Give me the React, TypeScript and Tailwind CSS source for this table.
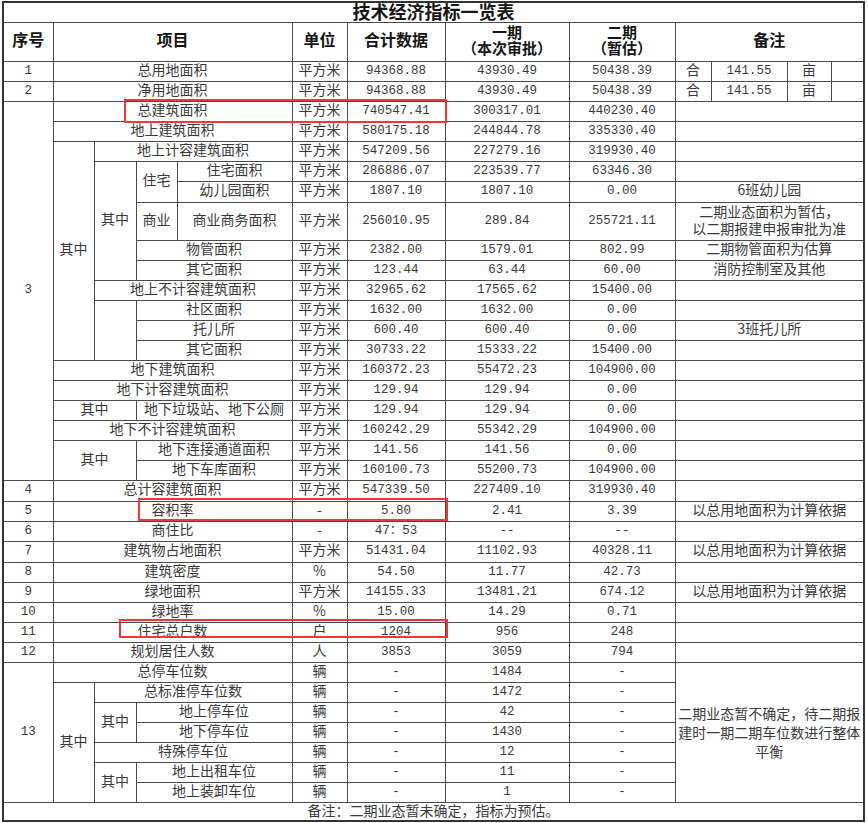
import React from "react";

const BASE = "border border-[#4a4a4a] px-0 pt-0 text-center align-middle whitespace-nowrap";
const CJK = "pb-[5px] leading-[14px]";
const NUM = "pb-[1px] leading-[18px] font-['Liberation_Mono','Noto_Sans_CJK_SC',monospace] text-[12.5px]";

type TP = { children?: React.ReactNode; cs?: number; rs?: number; n?: boolean; className?: string };
function T({ children, cs, rs, n, className }: TP) {
  return (
    <td colSpan={cs} rowSpan={rs} className={`${BASE} ${n ? NUM : className ? "" : CJK} ${className ?? ""}`}>
      {children}
    </td>
  );
}

function Tail({ u, a, b, c }: { u: string; a: string; b: string; c: string }) {
  return (
    <>
      <T>{u}</T>
      <T n>{a}</T>
      <T n>{b}</T>
      <T n>{c}</T>
    </>
  );
}

export default function App() {
  const widths = [50, 41, 42, 41, 115, 55, 98, 124, 106, 36, 76, 44, 33];
  return (
    <div className="relative w-[868px] h-[823px] bg-white overflow-hidden">
      <div className="pl-[2px] pt-[1px]">
        <table className="table-fixed border-collapse w-[862px] font-['Noto_Sans_CJK_SC',sans-serif] text-[14px] text-[#3a3a3a] border-2 border-[#333]">
          <colgroup>
            {widths.map((w, i) => (
              <col key={i} style={{ width: w }} />
            ))}
          </colgroup>
          <tbody>
            <tr className="h-[20px]">
              <T cs={13} className="font-bold text-[18px] leading-[17px] pb-[1px] text-[#151515]">技术经济指标一览表</T>
            </tr>
            <tr className="h-[39px] font-bold text-[16px] text-[#151515]">
              <T>序号</T>
              <T cs={4}>项目</T>
              <T>单位</T>
              <T>合计数据</T>
              <T className="text-[15px] leading-[16px] pb-[3px]">一期<br />（本次审批）</T>
              <T className="text-[15px] leading-[16px] pb-[3px]">二期<br />（暂估）</T>
              <T cs={4}>备注</T>
            </tr>
            <tr className="h-[20px]">
              <T n>1</T>
              <T cs={4}>总用地面积</T>
              <Tail u="平方米" a="94368.88" b="43930.49" c="50438.39" />
              <T>合</T>
              <T n>141.55</T>
              <T>亩</T>
              <T></T>
            </tr>
            <tr className="h-[20px]">
              <T n>2</T>
              <T cs={4}>净用地面积</T>
              <Tail u="平方米" a="94368.88" b="43930.49" c="50438.39" />
              <T>合</T>
              <T n>141.55</T>
              <T>亩</T>
              <T></T>
            </tr>
            <tr className="h-[20px]">
              <T rs={18} n>3</T>
              <T cs={4}>总建筑面积</T>
              <Tail u="平方米" a="740547.41" b="300317.01" c="440230.40" />
              <T cs={4}></T>
            </tr>
            <tr className="h-[20px]">
              <T cs={4}>地上建筑面积</T>
              <Tail u="平方米" a="580175.18" b="244844.78" c="335330.40" />
              <T cs={4}></T>
            </tr>
            <tr className="h-[20px]">
              <T rs={10}>其中</T>
              <T cs={3}>地上计容建筑面积</T>
              <Tail u="平方米" a="547209.56" b="227279.16" c="319930.40" />
              <T cs={4}></T>
            </tr>
            <tr className="h-[20px]">
              <T rs={5}>其中</T>
              <T rs={2}>住宅</T>
              <T>住宅面积</T>
              <Tail u="平方米" a="286886.07" b="223539.77" c="63346.30" />
              <T cs={4}></T>
            </tr>
            <tr className="h-[21px]">
              <T>幼儿园面积</T>
              <Tail u="平方米" a="1807.10" b="1807.10" c="0.00" />
              <T cs={4}>6班幼儿园</T>
            </tr>
            <tr className="h-[38px]">
              <T>商业</T>
              <T>商业商务面积</T>
              <Tail u="平方米" a="256010.95" b="289.84" c="255721.11" />
              <T cs={4} className="leading-[17px] pb-[3px]">二期业态面积为暂估，<br />以二期报建申报审批为准</T>
            </tr>
            <tr className="h-[20px]">
              <T cs={2}>物管面积</T>
              <Tail u="平方米" a="2382.00" b="1579.01" c="802.99" />
              <T cs={4}>二期物管面积为估算</T>
            </tr>
            <tr className="h-[20px]">
              <T cs={2}>其它面积</T>
              <Tail u="平方米" a="123.44" b="63.44" c="60.00" />
              <T cs={4}>消防控制室及其他</T>
            </tr>
            <tr className="h-[20px]">
              <T cs={3}>地上不计容建筑面积</T>
              <Tail u="平方米" a="32965.62" b="17565.62" c="15400.00" />
              <T cs={4}></T>
            </tr>
            <tr className="h-[20px]">
              <T rs={3}></T>
              <T cs={2}>社区面积</T>
              <Tail u="平方米" a="1632.00" b="1632.00" c="0.00" />
              <T cs={4}></T>
            </tr>
            <tr className="h-[20px]">
              <T cs={2}>托儿所</T>
              <Tail u="平方米" a="600.40" b="600.40" c="0.00" />
              <T cs={4}>3班托儿所</T>
            </tr>
            <tr className="h-[20px]">
              <T cs={2}>其它面积</T>
              <Tail u="平方米" a="30733.22" b="15333.22" c="15400.00" />
              <T cs={4}></T>
            </tr>
            <tr className="h-[20px]">
              <T cs={4}>地下建筑面积</T>
              <Tail u="平方米" a="160372.23" b="55472.23" c="104900.00" />
              <T cs={4}></T>
            </tr>
            <tr className="h-[20px]">
              <T cs={4}>地下计容建筑面积</T>
              <Tail u="平方米" a="129.94" b="129.94" c="0.00" />
              <T cs={4}></T>
            </tr>
            <tr className="h-[20px]">
              <T cs={2}>其中</T>
              <T cs={2}>地下垃圾站、地下公厕</T>
              <Tail u="平方米" a="129.94" b="129.94" c="0.00" />
              <T cs={4}></T>
            </tr>
            <tr className="h-[20px]">
              <T cs={4}>地下不计容建筑面积</T>
              <Tail u="平方米" a="160242.29" b="55342.29" c="104900.00" />
              <T cs={4}></T>
            </tr>
            <tr className="h-[20px]">
              <T cs={2} rs={2}>其中</T>
              <T cs={2}>地下连接通道面积</T>
              <Tail u="平方米" a="141.56" b="141.56" c="0.00" />
              <T cs={4}></T>
            </tr>
            <tr className="h-[20px]">
              <T cs={2}>地下车库面积</T>
              <Tail u="平方米" a="160100.73" b="55200.73" c="104900.00" />
              <T cs={4}></T>
            </tr>
            <tr className="h-[21px]">
              <T n>4</T>
              <T cs={4}>总计容建筑面积</T>
              <Tail u="平方米" a="547339.50" b="227409.10" c="319930.40" />
              <T cs={4}></T>
            </tr>
            <tr className="h-[20px]">
              <T n>5</T>
              <T cs={4}>容积率</T>
              <Tail u="-" a="5.80" b="2.41" c="3.39" />
              <T cs={4}>以总用地面积为计算依据</T>
            </tr>
            <tr className="h-[20px]">
              <T n>6</T>
              <T cs={4}>商住比</T>
              <Tail u="-" a="47：53" b="--" c="--" />
              <T cs={4}></T>
            </tr>
            <tr className="h-[21px]">
              <T n>7</T>
              <T cs={4}>建筑物占地面积</T>
              <Tail u="平方米" a="51431.04" b="11102.93" c="40328.11" />
              <T cs={4}>以总用地面积为计算依据</T>
            </tr>
            <tr className="h-[20px]">
              <T n>8</T>
              <T cs={4}>建筑密度</T>
              <Tail u="%" a="54.50" b="11.77" c="42.73" />
              <T cs={4}></T>
            </tr>
            <tr className="h-[20px]">
              <T n>9</T>
              <T cs={4}>绿地面积</T>
              <Tail u="平方米" a="14155.33" b="13481.21" c="674.12" />
              <T cs={4}>以总用地面积为计算依据</T>
            </tr>
            <tr className="h-[20px]">
              <T n>10</T>
              <T cs={4}>绿地率</T>
              <Tail u="%" a="15.00" b="14.29" c="0.71" />
              <T cs={4}></T>
            </tr>
            <tr className="h-[20px]">
              <T n>11</T>
              <T cs={4}>住宅总户数</T>
              <Tail u="户" a="1204" b="956" c="248" />
              <T cs={4}></T>
            </tr>
            <tr className="h-[20px]">
              <T n>12</T>
              <T cs={4}>规划居住人数</T>
              <Tail u="人" a="3853" b="3059" c="794" />
              <T cs={4}></T>
            </tr>
            <tr className="h-[20px]">
              <T rs={7} n>13</T>
              <T cs={4}>总停车位数</T>
              <Tail u="辆" a="-" b="1484" c="-" />
              <T cs={4} rs={7} className="leading-[19px] pb-0">
                二期业态暂不确定，待二期报<br />建时一期二期车位数进行整体<br />平衡
              </T>
            </tr>
            <tr className="h-[20px]">
              <T rs={6}>其中</T>
              <T cs={3}>总标准停车位数</T>
              <Tail u="辆" a="-" b="1472" c="-" />
            </tr>
            <tr className="h-[20px]">
              <T rs={2}>其中</T>
              <T cs={2}>地上停车位</T>
              <Tail u="辆" a="-" b="42" c="-" />
            </tr>
            <tr className="h-[20px]">
              <T cs={2}>地下停车位</T>
              <Tail u="辆" a="-" b="1430" c="-" />
            </tr>
            <tr className="h-[20px]">
              <T cs={3}>特殊停车位</T>
              <Tail u="辆" a="-" b="12" c="-" />
            </tr>
            <tr className="h-[20px]">
              <T rs={2}>其中</T>
              <T cs={2}>地上出租车位</T>
              <Tail u="辆" a="-" b="11" c="-" />
            </tr>
            <tr className="h-[20px]">
              <T cs={2}>地上装卸车位</T>
              <Tail u="辆" a="-" b="1" c="-" />
            </tr>
            <tr className="h-[18px]">
              <T cs={13} className="leading-[14px] pb-[3px]">备注：二期业态暂未确定，指标为预估。</T>
            </tr>
          </tbody>
        </table>
      </div>
      <div className="absolute left-[124px] top-[99px] w-[323px] h-[24px] border-2 border-[#f23535]" />
      <div className="absolute left-[138px] top-[498px] w-[310px] h-[23px] border-2 border-[#f23535]" />
      <div className="absolute left-[119px] top-[619px] w-[329px] h-[19px] border-2 border-[#f23535]" />
    </div>
  );
}
